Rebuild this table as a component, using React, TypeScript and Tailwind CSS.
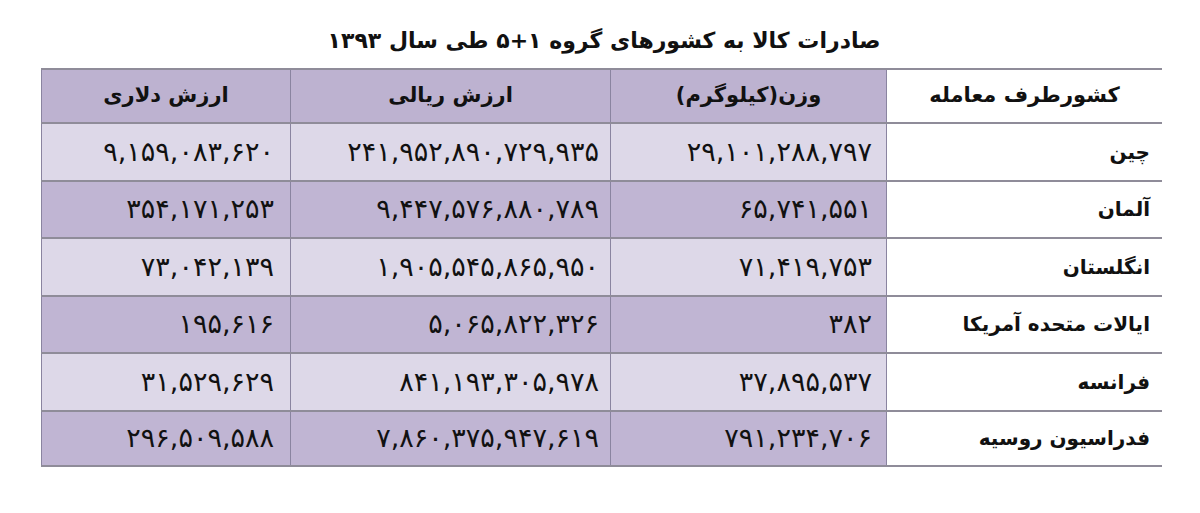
const rows = [
  { country: 'چین', weight: '۲۹,۱۰۱,۲۸۸,۷۹۷', rial: '۲۴۱,۹۵۲,۸۹۰,۷۲۹,۹۳۵', dollar: '۹,۱۵۹,۰۸۳,۶۲۰' },
  { country: 'آلمان', weight: '۶۵,۷۴۱,۵۵۱', rial: '۹,۴۴۷,۵۷۶,۸۸۰,۷۸۹', dollar: '۳۵۴,۱۷۱,۲۵۳' },
  { country: 'انگلستان', weight: '۷۱,۴۱۹,۷۵۳', rial: '۱,۹۰۵,۵۴۵,۸۶۵,۹۵۰', dollar: '۷۳,۰۴۲,۱۳۹' },
  { country: 'ایالات متحده آمریکا', weight: '۳۸۲', rial: '۵,۰۶۵,۸۲۲,۳۲۶', dollar: '۱۹۵,۶۱۶' },
  { country: 'فرانسه', weight: '۳۷,۸۹۵,۵۳۷', rial: '۸۴۱,۱۹۳,۳۰۵,۹۷۸', dollar: '۳۱,۵۲۹,۶۲۹' },
  { country: 'فدراسیون روسیه', weight: '۷۹۱,۲۳۴,۷۰۶', rial: '۷,۸۶۰,۳۷۵,۹۴۷,۶۱۹', dollar: '۲۹۶,۵۰۹,۵۸۸' },
];

const cols = 'grid grid-cols-[275px_277px_320px_249px]';

export default function App() {
  return (
    <div
      dir="rtl"
      className="w-[1200px] h-[513px] bg-white text-[#111] overflow-hidden"
      style={{ fontFamily: '"DejaVu Sans", sans-serif' }}
    >
      <h1 className="h-[68px] pt-[24px] text-center text-[22px] font-bold leading-[34px] pl-[8px]">
        صادرات کالا به کشورهای گروه ۱+۵ طی سال ۱۳۹۳
      </h1>

      <div className="mr-[38px] w-[1121px]">
        {/* header */}
        <div className={`${cols} h-[54px] border-t-2 border-[#8f8c99] text-[21px] font-bold`}>
          <div className="flex items-center justify-center">کشورطرف معامله</div>
          <div className="flex items-center justify-center bg-[#bdb2d0] border-x border-[#8a84a0]">
            وزن(کیلوگرم)
          </div>
          <div className="flex items-center justify-center bg-[#bdb2d0] border-l border-[#8a84a0]">
            ارزش ریالی
          </div>
          <div className="flex items-center justify-center bg-[#bdb2d0] border-l border-[#8a84a0]">
            ارزش دلاری
          </div>
        </div>

        {rows.map((r, i) => {
          const bg = i % 2 === 0 ? 'bg-[#ddd8e8]' : 'bg-[#c0b5d3]';
          return (
            <div
              key={i}
              className={`${cols} h-[57.5px] border-t-2 border-[#8f8c99] shadow-[inset_0_1px_0_#ffffff] ${i === rows.length - 1 ? 'border-b-2' : ''}`}
            >
              <div className="flex items-center pr-[12px] text-[20px] font-bold">{r.country}</div>
              <div className={`flex items-center pr-[14px] ${bg} border-x border-[#8a84a0] text-[27px]`}>
                <span dir="ltr">{r.weight}</span>
              </div>
              <div className={`flex items-center pr-[11px] ${bg} border-l border-[#8a84a0] text-[27px]`}>
                <span dir="ltr">{r.rial}</span>
              </div>
              <div className={`flex items-center pr-[16px] ${bg} border-l border-[#8a84a0] text-[27px]`}>
                <span dir="ltr">{r.dollar}</span>
              </div>
            </div>
          );
        })}
      </div>
    </div>
  );
}
